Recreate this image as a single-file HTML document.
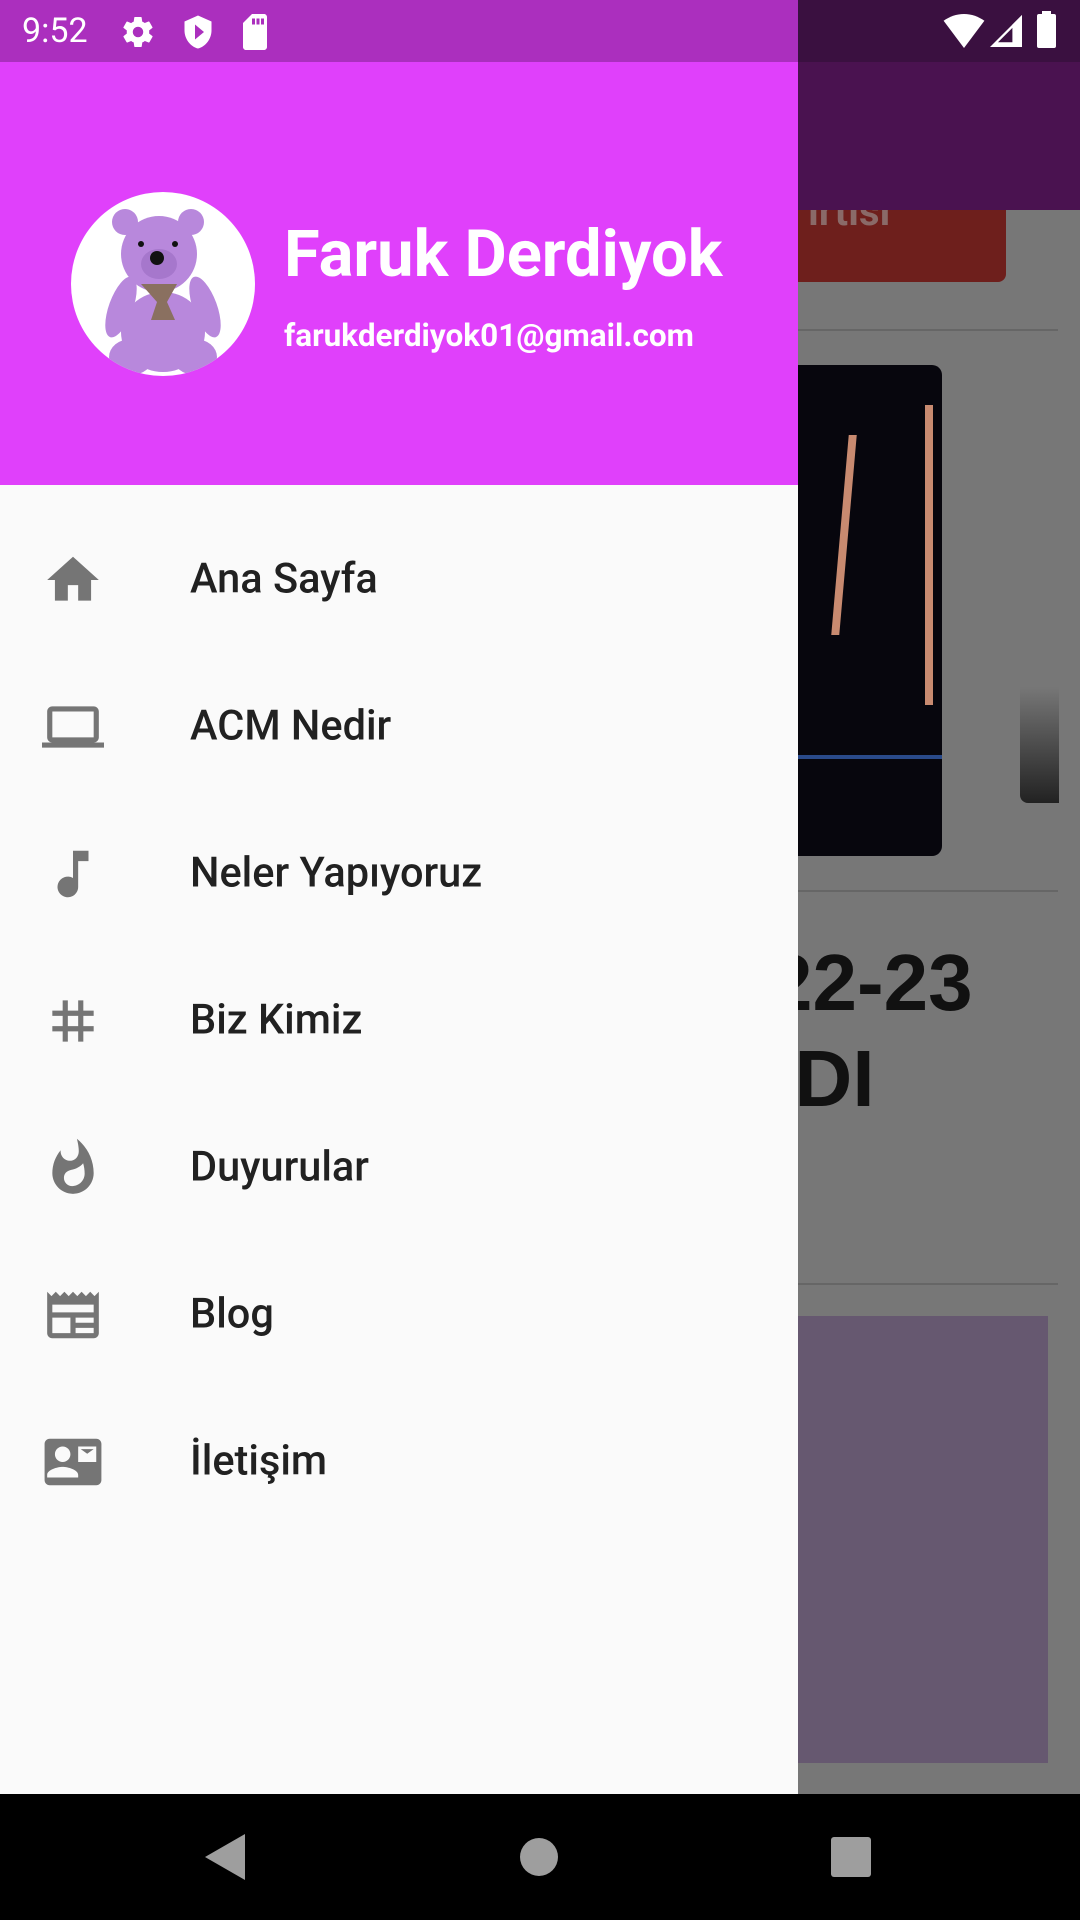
<!DOCTYPE html>
<html><head><meta charset="utf-8"><style>
*{margin:0;padding:0;box-sizing:border-box}
body{width:1080px;height:1920px;position:relative;overflow:hidden;background:#777;font-family:"Roboto","Liberation Sans",sans-serif}
.abs{position:absolute}
.item{position:absolute;left:0;width:798px;height:100px}
.item svg{position:absolute;left:42px;top:20px;width:62px;height:62px;fill:#757575}
.item span{position:absolute;left:190px;top:50%;transform:translateY(-50%);font-size:41.5px;color:#212121;font-weight:500}
</style></head><body>
<div class="abs" style="left:798px;top:0;width:282px;height:62px;background:#3a1040"></div>
<div class="abs" style="left:798px;top:62px;width:282px;height:148px;background:#4a1250"></div>
<div class="abs" style="left:780px;top:210px;width:226px;height:72px;background:#6e1f1c;border-radius:0 0 8px 8px;overflow:hidden"><span style="position:absolute;left:28px;top:-22px;color:#8a6a68;font-weight:bold;font-size:40px">ırtısı</span></div>
<div class="abs" style="left:798px;top:329px;width:260px;height:2px;background:#666"></div>
<div class="abs" style="left:780px;top:365px;width:162px;height:491px;background:#07060d;border-radius:10px;overflow:hidden">
<div class="abs" style="left:60px;top:70px;width:8px;height:200px;background:#c88a70;transform:skewX(-5deg)"></div>
<div class="abs" style="left:145px;top:40px;width:8px;height:300px;background:#c88a70"></div>
<div class="abs" style="left:0;top:390px;width:162px;height:4px;background:#2a4a8a"></div>
</div>
<div class="abs" style="left:1020px;top:416px;width:39px;height:387px;background:linear-gradient(#777 0%,#777 70%,#222 100%);border-radius:0 0 0 8px"></div>
<div class="abs" style="left:798px;top:890px;width:260px;height:2px;background:#666"></div>
<div class="abs" style="left:679px;top:935px;font-size:80px;font-weight:bold;color:#111;line-height:96px;font-family:'Liberation Sans',sans-serif">2022-23<br>KADI</div>
<div class="abs" style="left:798px;top:1283px;width:260px;height:2px;background:#666"></div>
<div class="abs" style="left:780px;top:1316px;width:268px;height:447px;background:#665870"></div>
<div class="abs" style="left:0;top:0;width:798px;height:62px;background:#ab2fbe"></div>
<div class="abs" style="left:22px;top:10px;color:#fff;font-size:34px;line-height:42px">9:52</div>
<svg class="abs" style="left:120px;top:14px" width="36" height="36" viewBox="0 0 24 24" fill="#fff"><path d="M19.4 13c.04-.3.06-.65.06-1s-.02-.7-.07-1l2.1-1.650c.2-.15.24-.42.12-.64l-2-3.460c-.12-.22-.39-.3-.61-.22l-2.490 1c-.52-.4-1.080-.73-1.690-.98l-.38-2.650A.49.49 0 0014 2h-4c-.25 0-.46.18-.49.42l-.38 2.650c-.61.25-1.170.59-1.690.98l-2.490-1c-.23-.09-.49 0-.61.22l-2 3.460c-.13.22-.07.49.12.64L4.570 11c-.04.32-.07.66-.07 1s.02.68.07 1l-2.110 1.650c-.19.15-.24.42-.12.64l2 3.460c.12.22.39.3.61.22l2.490-1c.52.4 1.080.73 1.690.98l.38 2.650c.03.24.24.42.49.42h4c.25 0 .46-.18.49-.42l.38-2.650c.61-.25 1.170-.59 1.690-.98l2.490 1c.23.09.49 0 .61-.22l2-3.460c.12-.22.07-.49-.12-.64L19.400 13zM12 15.500A3.500 3.500 0 1112 8.500a3.500 3.500 0 010 7z"/></svg>
<svg class="abs" style="left:180px;top:13px" width="36" height="38" viewBox="0 0 24 24" fill="#fff"><path d="M12 1L3 5v6c0 5.500 3.800 10.700 9 12 5.200-1.300 9-6.500 9-12V5l-9-4zm-2 16V7l6 5-6 5z"/></svg>
<svg class="abs" style="left:240px;top:14px" width="30" height="36" viewBox="0 0 20 24" fill="#fff"><path d="M16 0H8L2 6v16c0 1.100.9 2 2 2h12c1.100 0 2-.9 2-2V2c0-1.100-.9-2-2-2zM10 7H8V3h2v4zm3 0h-2V3h2v4zm3 0h-2V3h2v4z"/></svg>
<svg class="abs" style="left:943px;top:14px" width="42" height="34" viewBox="0 0 24 20" fill="#fff"><path d="M12 20L0 4C3.500 1.500 7.600 0 12 0s8.500 1.500 12 4z"/></svg>
<svg class="abs" style="left:990px;top:14px" width="32" height="34" viewBox="0 0 20 20"><path d="M20 0v20H0z" fill="#fff"/><path d="M17 5v12H5z" fill="#3a1040"/><path d="M20 0v20H14V6z" fill="#fff"/></svg>
<div class="abs" style="left:1037px;top:14px;width:19px;height:34px;background:#fff;border-radius:2px"></div>
<div class="abs" style="left:1042px;top:11px;width:9px;height:4px;background:#fff"></div>

<div class="abs" style="left:0;top:62px;width:798px;height:423px;background:#e040fb"></div>
<div class="abs" style="left:71px;top:192px;width:184px;height:184px;border-radius:50%;background:#fff;overflow:hidden">
<svg width="184" height="184" viewBox="0 0 184 184">
<g fill="#b888dc">
<ellipse cx="92" cy="140" rx="42" ry="40"/>
<ellipse cx="60" cy="165" rx="22" ry="18"/><ellipse cx="124" cy="165" rx="22" ry="18"/>
<ellipse cx="50" cy="115" rx="12" ry="32" transform="rotate(20 50 115)"/>
<ellipse cx="134" cy="115" rx="12" ry="32" transform="rotate(-20 134 115)"/>
<circle cx="88" cy="62" r="38"/>
<circle cx="54" cy="30" r="13"/><circle cx="120" cy="30" r="13"/>
</g>
<ellipse cx="88" cy="72" rx="18" ry="15" fill="#a677cc"/>
<circle cx="86" cy="66" r="7" fill="#111"/>
<circle cx="70" cy="52" r="3" fill="#111"/><circle cx="104" cy="52" r="3" fill="#111"/>
<path d="M70 92 L106 92 L96 110 L104 128 L80 128 L86 110Z" fill="#8a7060"/>
</svg></div>
<div class="abs" style="left:284px;top:214px;color:#fff;font-size:65px;font-weight:bold;line-height:80px">Faruk Derdiyok</div>
<div class="abs" style="left:284px;top:316px;color:#fff;font-size:31.5px;font-weight:bold;line-height:40px">farukderdiyok01@gmail.com</div>

<div class="abs" style="left:0;top:485px;width:798px;height:1309px;background:#fafafa"></div>
<div class="item" style="top:529px"><svg viewBox="0 0 24 24"><path d="M10 20v-6h4v6h5v-8h3L12 3 2 12h3v8z"/></svg><span>Ana Sayfa</span></div>
<div class="item" style="top:676px"><svg viewBox="0 0 24 24"><path d="M20 18c1.100 0 2-.9 2-2V6c0-1.100-.9-2-2-2H4c-1.100 0-2 .9-2 2v10c0 1.100.9 2 2 2H0v2h24v-2h-4zM4 6h16v10H4V6z"/></svg><span>ACM Nedir</span></div>
<div class="item" style="top:823px"><svg viewBox="0 0 24 24"><path d="M12 3v10.550A4 4 0 1014 17V7h4V3h-6z"/></svg><span>Neler Yapıyoruz</span></div>
<div class="item" style="top:970px"><svg viewBox="0 0 24 24"><path d="M20 10V8h-4V4h-2v4h-4V4H8v4H4v2h4v4H4v2h4v4h2v-4h4v4h2v-4h4v-2h-4v-4h4zm-6 4h-4v-4h4v4z"/></svg><span>Biz Kimiz</span></div>
<div class="item" style="top:1117px"><svg viewBox="0 0 24 24"><path d="M13.500.67s.74 2.650.74 4.800c0 2.060-1.350 3.730-3.410 3.730-2.070 0-3.630-1.670-3.630-3.730l.03-.36C5.210 7.510 4 10.620 4 14c0 4.420 3.580 8 8 8s8-3.580 8-8C20 8.610 17.410 3.800 13.500.67zM11.710 19c-1.780 0-3.220-1.400-3.220-3.140 0-1.620 1.050-2.760 2.810-3.120 1.770-.36 3.600-1.210 4.620-2.580.39 1.290.59 2.650.59 4.040 0 2.650-2.150 4.800-4.800 4.800z"/></svg><span>Duyurular</span></div>
<div class="item" style="top:1264px"><svg viewBox="0 0 24 24"><path d="M22 3l-1.670 1.670L18.670 3 17 4.670 15.330 3l-1.660 1.670L12 3l-1.670 1.670L8.670 3 7 4.670 5.330 3 3.670 4.670 2 3v16c0 1.100.9 2 2 2h16c1.100 0 2-.9 2-2V3zM11 19H4v-6h7v6zm9 0h-7v-2h7v2zm0-4h-7v-2h7v2zm0-4H4V8h16v3z"/></svg><span>Blog</span></div>
<div class="item" style="top:1411px"><svg viewBox="0 0 24 24"><path d="M21 3H3C1.900 3 1 3.900 1 5v14c0 1.100.9 2 2 2h18c1.100 0 1.990-.9 1.990-2L23 5c0-1.100-.9-2-2-2zM8 6c1.660 0 3 1.340 3 3s-1.340 3-3 3-3-1.340-3-3 1.340-3 3-3zm6 12H2v-1c0-2 4-3.100 6-3.100s6 1.100 6 3.100v1zm7-6h-7V6h7v6zm-1-5h-5l2.500 1.800L20 7z"/></svg><span>İletişim</span></div>

<div class="abs" style="left:0;top:1794px;width:1080px;height:126px;background:#000"></div>
<svg class="abs" style="left:205px;top:1834px" width="40" height="46" viewBox="0 0 40 46"><path d="M40 0V46L0 23z" fill="#9e9e9e"/></svg>
<div class="abs" style="left:520px;top:1838px;width:38px;height:38px;border-radius:50%;background:#9e9e9e"></div>
<div class="abs" style="left:831px;top:1837px;width:40px;height:40px;border-radius:3px;background:#9e9e9e"></div>
</body></html>
